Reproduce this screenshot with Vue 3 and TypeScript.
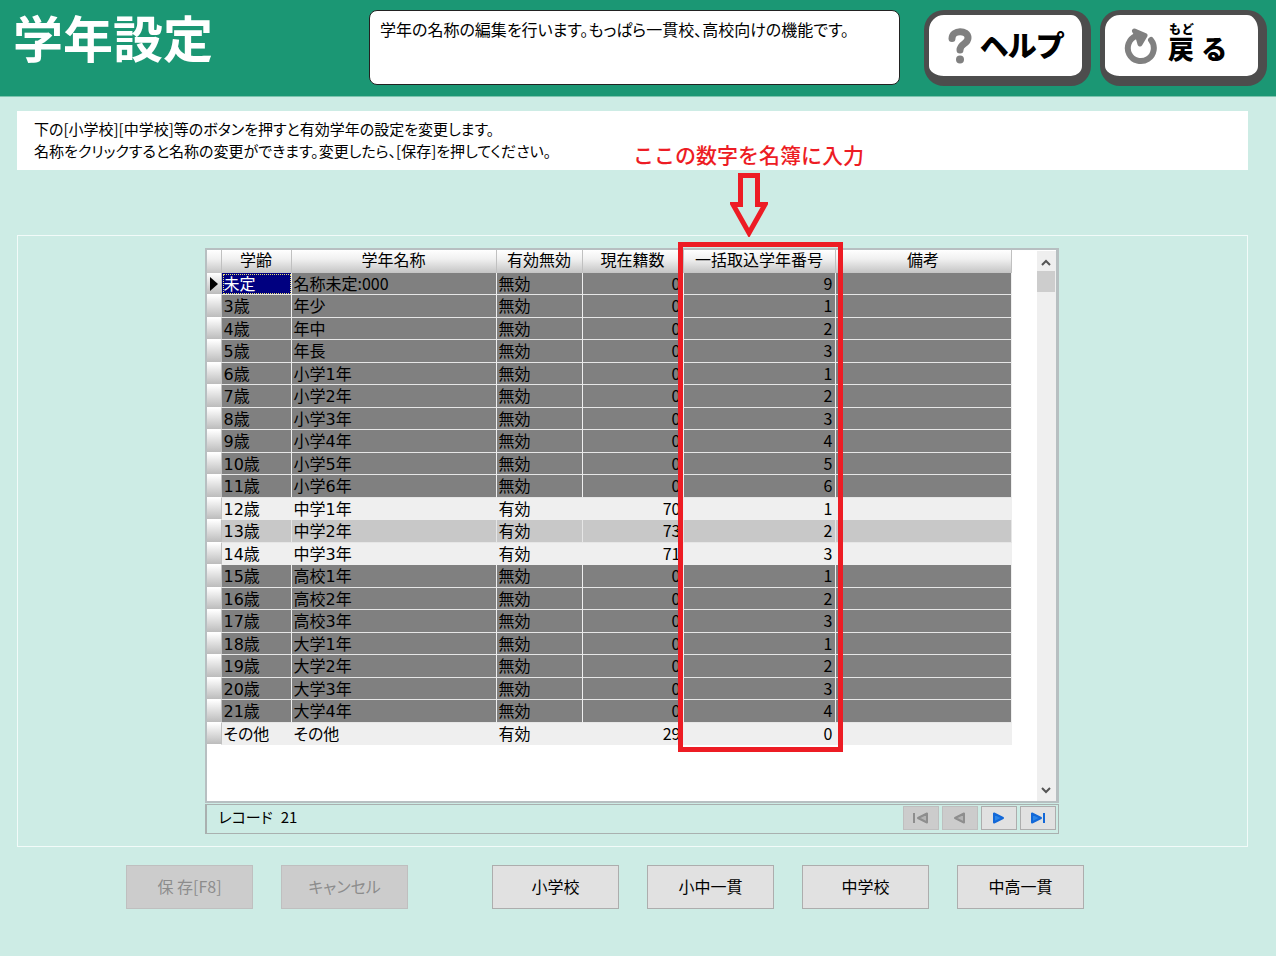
<script setup lang="ts">
import { ref } from 'vue'

interface Grade {
  age: string
  name: string
  active: boolean
  count: number
  code: number
}

const grades = ref<Grade[]>([
  { age: '未定', name: '名称未定:000', active: false, count: 0, code: 9 },
  { age: '3歳', name: '年少', active: false, count: 0, code: 1 },
  { age: '4歳', name: '年中', active: false, count: 0, code: 2 },
  { age: '5歳', name: '年長', active: false, count: 0, code: 3 },
  { age: '6歳', name: '小学1年', active: false, count: 0, code: 1 },
  { age: '7歳', name: '小学2年', active: false, count: 0, code: 2 },
  { age: '8歳', name: '小学3年', active: false, count: 0, code: 3 },
  { age: '9歳', name: '小学4年', active: false, count: 0, code: 4 },
  { age: '10歳', name: '小学5年', active: false, count: 0, code: 5 },
  { age: '11歳', name: '小学6年', active: false, count: 0, code: 6 },
  { age: '12歳', name: '中学1年', active: true, count: 70, code: 1 },
  { age: '13歳', name: '中学2年', active: true, count: 73, code: 2 },
  { age: '14歳', name: '中学3年', active: true, count: 71, code: 3 },
  { age: '15歳', name: '高校1年', active: false, count: 0, code: 1 },
  { age: '16歳', name: '高校2年', active: false, count: 0, code: 2 },
  { age: '17歳', name: '高校3年', active: false, count: 0, code: 3 },
  { age: '18歳', name: '大学1年', active: false, count: 0, code: 1 },
  { age: '19歳', name: '大学2年', active: false, count: 0, code: 2 },
  { age: '20歳', name: '大学3年', active: false, count: 0, code: 3 },
  { age: '21歳', name: '大学4年', active: false, count: 0, code: 4 },
  { age: 'その他', name: 'その他', active: true, count: 29, code: 0 },
])

const selected = ref(0)
const presets = ['小学校', '小中一貫', '中学校', '中高一貫']
</script>

<template>
  <div class="screen">
    <header class="topbar">
      <h1 class="title">学年設定</h1>
      <p class="about">学年の名称の編集を行います。もっぱら一貫校、高校向けの機能です。</p>
      <div class="top-actions">
        <button type="button" class="big-btn">
          <svg class="help-icon" viewBox="0 0 24 36" aria-hidden="true">
            <path d="M4 10.500 C4 1.500 20 1.500 20 10 C20 16 12 15.500 12 22" fill="none" stroke="#808080" stroke-width="7" stroke-linecap="round" />
            <circle cx="12" cy="31.500" r="4" fill="#808080" />
          </svg>
          <span class="help-text">ヘルプ</span>
        </button>
        <button type="button" class="big-btn back">
          <svg class="back-icon" viewBox="0 0 34 38" aria-hidden="true">
            <path d="M12 9 A13 13 0 1 0 27 13" fill="none" stroke="#808080" stroke-width="6" stroke-linecap="round" />
            <path d="M10.500 4 L21 8.500 L16 17 L14 10 Z" fill="#808080" stroke="#808080" stroke-width="5" stroke-linecap="round" stroke-linejoin="round" />
          </svg>
          <span class="back-text"><ruby>戻<rt>もど</rt></ruby><span>る</span></span>
        </button>
      </div>
    </header>

    <main class="content">
      <section class="notice">
        <p>下の[小学校][中学校]等のボタンを押すと有効学年の設定を変更します。</p>
        <p>名称をクリックすると名称の変更ができます。変更したら、[保存]を押してください。</p>
      </section>

      <section class="group">
        <div class="grid-wrap">
          <div class="grid">
            <table>
              <colgroup>
                <col class="c-mark" />
                <col class="c-age" />
                <col class="c-name" />
                <col class="c-active" />
                <col class="c-count" />
                <col class="c-code" />
                <col />
              </colgroup>
              <thead>
                <tr>
                  <th></th>
                  <th scope="col">学齢</th>
                  <th scope="col">学年名称</th>
                  <th scope="col">有効無効</th>
                  <th scope="col">現在籍数</th>
                  <th scope="col">一括取込学年番号</th>
                  <th scope="col">備考</th>
                </tr>
              </thead>
              <tbody>
                <tr
                  v-for="(g, i) in grades"
                  :key="g.age"
                  :class="{ active: g.active, shaded: g.active && i % 2 === 1 }"
                  @click="selected = i"
                >
                  <td class="mark">
                    <svg v-if="i === selected" viewBox="0 0 8 14" aria-hidden="true"><path d="M0 0 L8 7 L0 14 Z" /></svg>
                  </td>
                  <td class="wide" :class="{ selected: i === selected }">{{ g.age }}</td>
                  <td :class="{ wide: i > 0 }">{{ g.name }}</td>
                  <td>{{ g.active ? '有効' : '無効' }}</td>
                  <td class="num">{{ g.count }}</td>
                  <td class="num">{{ g.code }}</td>
                  <td></td>
                </tr>
              </tbody>
            </table>
            <div class="scrollbar">
              <svg viewBox="0 0 10 7" aria-hidden="true"><path d="M1 6 L5 2 L9 6" /></svg>
              <div class="thumb"></div>
              <svg viewBox="0 0 10 7" aria-hidden="true"><path d="M1 1 L5 5 L9 1" /></svg>
            </div>
          </div>

          <div class="status">
            <span class="records">レコード<span>21</span></span>
            <button type="button" disabled aria-label="先頭">
              <svg viewBox="0 0 16 12"><path d="M1 1 V11" /><path d="M14 1.500 V10.500 L5 6 Z" /></svg>
            </button>
            <button type="button" disabled aria-label="前へ">
              <svg viewBox="0 0 16 12"><path d="M12 1.500 V10.500 L3 6 Z" /></svg>
            </button>
            <button type="button" aria-label="次へ">
              <svg viewBox="0 0 16 12"><path d="M3 1.500 V10.500 L12 6 Z" /></svg>
            </button>
            <button type="button" aria-label="最後">
              <svg viewBox="0 0 16 12"><path d="M2 1.500 V10.500 L11 6 Z" /><path d="M14 1 V11" /></svg>
            </button>
          </div>

          <div class="callout">
            <span class="callout-text">ここの数字を名簿に入力</span>
            <svg class="arrow" viewBox="0 0 38 64" aria-hidden="true">
              <path d="M10.500 2.500 H27.500 V31.500 H35 L19 60 L3 31.500 H10.500 Z" />
            </svg>
          </div>
          <div class="frame"></div>
        </div>
      </section>

      <div class="actions">
        <div class="action-set">
          <button type="button" disabled>保 存[F8]</button>
          <button type="button" disabled>キャンセル</button>
        </div>
        <div class="action-set">
          <button v-for="p in presets" :key="p" type="button">{{ p }}</button>
        </div>
      </div>
    </main>
  </div>
</template>

<style>
body {
  margin: 0;
  background: #cdece5;
}
</style>

<style scoped>
.screen {
  min-height: 100vh;
  background: #cdece5;
  color: #000;
  font-family: "Noto Sans CJK JP", sans-serif;
  font-size: 16px;
  font-weight: 400;
  line-height: 22px;
  font-feature-settings: "palt";
}
h1,
p {
  margin: 0;
}
button {
  font: inherit;
  font-feature-settings: inherit;
  color: inherit;
  padding: 0;
}
.topbar {
  display: flex;
  align-items: flex-start;
  box-sizing: border-box;
  min-height: 97px;
  padding: 10px 9px 10px 13px;
  background: #1b9774;
  border-bottom: 1px solid #7cc4ae;
}
.title {
  flex: 0 0 356px;
  color: #fff;
  font-size: 50px;
  font-weight: 700;
  line-height: 52px;
  font-feature-settings: normal;
}
.about {
  flex: 1;
  box-sizing: border-box;
  min-height: 75px;
  padding: 7px 10px;
  background: #fff;
  border: 1px solid #222;
  border-radius: 8px;
}
.top-actions {
  display: flex;
  gap: 9px;
  margin-left: 24px;
}
.big-btn {
  display: flex;
  align-items: center;
  box-sizing: border-box;
  width: 167px;
  height: 76px;
  padding-left: 19px;
  background: #fff;
  border: solid #4d4d4d;
  border-width: 5px 9px 10px 5px;
  border-radius: 20px;
  font-weight: 900;
}
.help-icon {
  width: 24px;
  height: 36px;
}
.help-text {
  margin-left: 8px;
  padding-bottom: 4px;
  font-size: 29px;
  line-height: 36px;
}
.back-icon {
  width: 34px;
  height: 38px;
}
.back-text {
  display: flex;
  align-items: flex-end;
  gap: 8px;
  margin-left: 10px;
  padding-bottom: 4px;
  font-size: 26px;
  line-height: 32px;
}
.back-text rt {
  font-size: 12px;
  line-height: 14px;
}
.content {
  padding: 14px 28px 14px 17px;
}
.notice {
  padding: 7px 17px 8px;
  background: #fff;
  font-size: 15px;
}
.group {
  margin-top: 65px;
  padding: 12px 9px 12px 7px;
  border: 1px solid #f2fbf9;
}
.grid-wrap {
  position: relative;
  width: 100%;
  max-width: 854px;
  margin: 0 auto;
}
.grid {
  display: flex;
  box-sizing: border-box;
  min-height: 555px;
  background: #fff;
  border: 2px solid #b7bfc1;
  border-right-width: 3px;
}
table {
  flex: 1;
  align-self: flex-start;
  table-layout: fixed;
  width: 100%;
  border-collapse: separate;
  border-spacing: 0;
}
.c-mark { width: 15px; }
.c-age { width: 70px; }
.c-name { width: 205px; }
.c-active { width: 86px; }
.c-count { width: 101px; }
.c-code { width: 152px; }
th,
td {
  box-sizing: border-box;
  height: 22px;
  padding: 0 2px;
  line-height: 20px;
  white-space: nowrap;
  vertical-align: baseline;
}
tbody tr:nth-child(even) td {
  height: 23px;
}
th {
  height: 23px;
  padding-bottom: 4px;
  font-weight: 400;
  line-height: 18px;
  text-align: center;
  background: linear-gradient(#fff, #f0f0f0 40%, #c4c4c4);
  border-right: 1px solid #c0c0c0;
}
td {
  background: #808080;
  border-right: 1px solid #efefef;
  border-bottom: 1px solid #e6e6e6;
}
.active td {
  background: #efefef;
  border-color: #efefef;
}
.shaded td {
  background: #c8c8c8;
  border-color: #e6e6e6;
}
tbody .mark {
  padding: 0 2px 0 3px;
  background: linear-gradient(#fff, #bcbcbc);
  border-right-color: #c0c0c0;
  border-bottom-color: #fff;
  vertical-align: middle;
}
.mark svg {
  display: block;
  width: 8px;
  height: 14px;
}
td.selected {
  background: #000080;
  color: #fff;
  outline: 1px dotted #e8e070;
  outline-offset: -2px;
}
.wide {
  font-family: "DejaVu Sans", "Noto Sans CJK JP", sans-serif;
}
td.wide {
  line-height: 18px;
}
.num {
  text-align: right;
}
.scrollbar {
  display: flex;
  flex-direction: column;
  align-items: center;
  width: 19px;
  margin: 1px 0 0 25px;
  padding: 8px 0 7px;
  box-sizing: border-box;
  background: #efefef;
}
.scrollbar svg {
  width: 10px;
  height: 7px;
  fill: none;
  stroke: #555;
  stroke-width: 2;
}
.thumb {
  width: 18px;
  height: 21px;
  margin: 5px 0 auto;
  background: #cdcdcd;
}
.status {
  display: flex;
  align-items: center;
  gap: 3px;
  box-sizing: border-box;
  min-height: 30px;
  margin-top: 1px;
  padding: 0 2px 2px 12px;
  border: solid #a9b0af;
  border-width: 1px 1px 1px 2px;
}
.records {
  flex: 1;
  padding-bottom: 2px;
  font-size: 15px;
}
.records span {
  margin-left: 8px;
}
.status button {
  display: flex;
  align-items: center;
  justify-content: center;
  width: 36px;
  height: 24px;
  background: #e1e1e1;
  border: 1px solid #adadad;
}
.status svg {
  width: 16px;
  height: 12px;
  fill: #2c86e8;
  stroke: #1268d8;
  stroke-width: 2;
  stroke-linejoin: round;
}
.status button:disabled {
  background: #ccc;
  border-color: #bfbfbf;
}
.status button:disabled svg {
  fill: #b4b4b4;
  stroke: #8e8e8e;
}
.callout {
  position: absolute;
  bottom: calc(100% + 11px);
  left: 428px;
  display: flex;
  flex-direction: column;
  align-items: center;
  width: 232px;
  color: #ed1c24;
}
.callout-text {
  padding-bottom: 4px;
  font-size: 21px;
  font-weight: 500;
  line-height: 30px;
  white-space: nowrap;
  font-feature-settings: normal;
}
.arrow {
  width: 38px;
  height: 64px;
  fill: none;
  stroke: #ed1c24;
  stroke-width: 5;
}
.frame {
  position: absolute;
  top: -6px;
  left: 473px;
  box-sizing: border-box;
  width: 165px;
  height: 510px;
  border: 5px solid #ed1c24;
  pointer-events: none;
}
.actions {
  display: flex;
  gap: 84px;
  margin-top: 18px;
  padding-left: 109px;
}
.action-set {
  display: flex;
  gap: 28px;
}
.action-set button {
  width: 127px;
  height: 44px;
  padding-bottom: 2px;
  background: #e1e1e1;
  border: 1px solid #adadad;
}
.action-set button:disabled {
  background: #ccc;
  border-color: #bfbfbf;
  color: #8c8c8c;
}
</style>
